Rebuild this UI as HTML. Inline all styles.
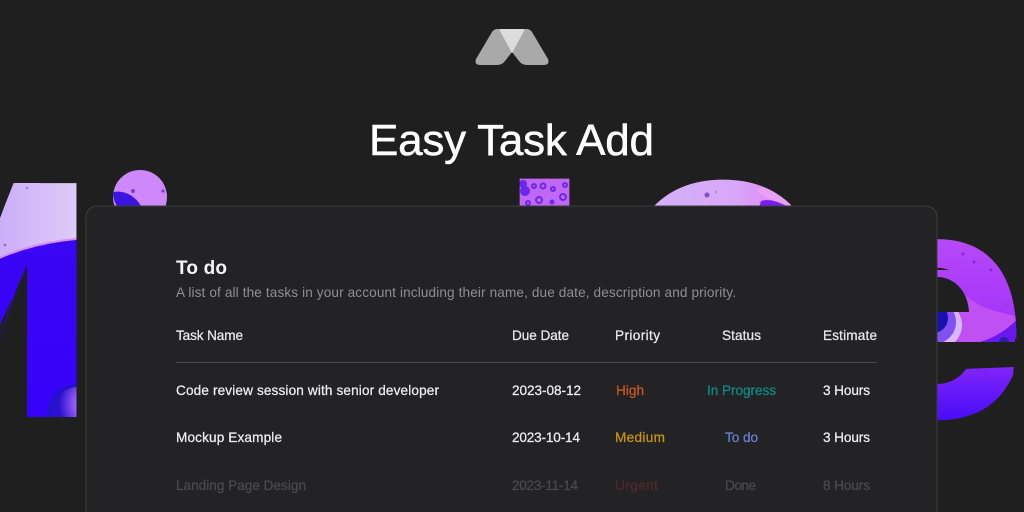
<!DOCTYPE html>
<html><head><meta charset="utf-8"><style>
html,body{margin:0;padding:0;background:#1f1f1f;width:1024px;height:512px;overflow:hidden}
svg{display:block}
text{font-family:"Liberation Sans",sans-serif}
.t{font-size:13.6px;stroke-width:.25px}
</style></head><body>
<svg width="1024" height="512" viewBox="0 0 1024 512" xmlns="http://www.w3.org/2000/svg">
<defs>
<linearGradient id="lav" x1="0" y1="0" x2="1" y2="0"><stop offset="0" stop-color="#c9aaf9"/><stop offset="1" stop-color="#e2d0f8"/></linearGradient>
<linearGradient id="blue" x1="0" y1="0" x2="0" y2="1"><stop offset="0" stop-color="#3a08f0"/><stop offset="1" stop-color="#3600fa"/></linearGradient>
<linearGradient id="oG" x1="0" y1="0" x2="1" y2="0"><stop offset="0" stop-color="#d0b4fa"/><stop offset=".6" stop-color="#d8a8f8"/><stop offset="1" stop-color="#e070f4"/></linearGradient>
<linearGradient id="eG" x1="0" y1="0" x2="0" y2="1"><stop offset="0" stop-color="#b84cf8"/><stop offset=".55" stop-color="#a030fa"/><stop offset="1" stop-color="#3c08f8"/></linearGradient>
<radialGradient id="bub" cx=".75" cy=".3" r=".6"><stop offset="0" stop-color="#e8d0fa"/><stop offset=".6" stop-color="#8a50f0"/><stop offset="1" stop-color="#2a10d0"/></radialGradient>
<clipPath id="cm"><text x="-184" y="417" font-size="340" font-weight="700">M</text><polygon points="14,183 40,183 40,417 27,417 27,265 0,327 0,218"/></clipPath>
<clipPath id="cl"><text transform="translate(494.400,425) scale(1.065,1)" font-size="340" font-weight="700">l</text></clipPath>
<clipPath id="co"><text transform="translate(611,417) scale(.85,1)" font-size="340" font-weight="700">O</text></clipPath>
<clipPath id="ce"><text transform="translate(839,421) scale(1,.973) translate(0,-4)" font-size="340" font-weight="700">e</text><rect x="937" y="270" width="50" height="60"/><rect x="937" y="325" width="78" height="17"/><polygon points="937,370 1014,367 1012,378 960,395 937,395"/></clipPath>
</defs>

<!-- large background word -->
<g clip-path="url(#cm)">
<rect x="-10" y="170" width="100" height="260" fill="url(#blue)"/>
<path d="M-10 170H90V238C50 240 20 248 -10 262Z" fill="url(#lav)"/>
<path d="M-10 262C20 248 50 240 90 238" fill="none" stroke="#d98cf0" stroke-width="2"/>
<circle cx="78" cy="415" r="31" fill="#2412c8"/>
<circle cx="79" cy="416" r="29" fill="url(#bub)"/>
<circle cx="27" cy="188" r="1.300" fill="#a878d8"/>
<circle cx="5" cy="245" r="1.300" fill="#a05cd0"/>
</g>
<polygon points="-1,182 14,182 -1,220" fill="#1f1f1f"/>
<polygon points="-1,327 13,297 -1,342" fill="#1f1f1f"/>
<circle cx="140" cy="197" r="27" fill="#cf88fa"/>
<path d="M113 192C125 190 135 196 141 206H117C114 201 113 197 113 192Z" fill="#3a14e0"/>
<circle cx="133" cy="191" r="2" fill="#7a40c8"/><circle cx="163" cy="191" r="1.600" fill="#7a40c8"/>
<g clip-path="url(#cl)">
<rect x="515" y="178" width="60" height="40" fill="#c068f4"/>
<g fill="none" stroke="#6a28ee" stroke-width="2">
<circle cx="525" cy="191" r="4" fill="#6a28ee"/><circle cx="539" cy="200" r="3"/><circle cx="563" cy="197" r="3"/><circle cx="543" cy="186" r="2.500"/><circle cx="528" cy="203" r="2"/><circle cx="553" cy="189" r="2"/><circle cx="552" cy="202" r="1.500"/><circle cx="534" cy="186" r="2"/><circle cx="565" cy="185" r="2"/><circle cx="523" cy="184" r="3" fill="#6a28ee"/>
</g>
</g>
<g clip-path="url(#co)">
<rect x="620" y="170" width="190" height="50" fill="url(#oG)"/>
<path d="M756 188C760 197 768 199 790 206V185Z" fill="#e8a0f6"/>
<path d="M759 208L761 201C768 199 776 200 790 208Z" fill="#7a1cf4"/>
<circle cx="707" cy="195" r="2.500" fill="#8a4cc8"/><circle cx="716" cy="192" r="1" fill="#a878d8"/>
</g>
<g clip-path="url(#ce)">
<rect x="930" y="230" width="95" height="200" fill="url(#eG)"/>
<path d="M966 296C985 312 1005 312 1020 318V345H930V296Z" fill="#c050f4"/>
<path d="M1020 316V345H965C990 342 1008 330 1020 316Z" fill="#6a18f0"/>
<circle cx="938" cy="325" r="24" fill="#d8b8fa"/>
<circle cx="934" cy="322" r="22" fill="#8050f0"/>
<circle cx="933" cy="318" r="15" fill="#1a10b0"/>
<circle cx="1004" cy="342" r="5" fill="#2a20a0"/>
<circle cx="963" cy="254" r="1.500" fill="#7a30c8"/><circle cx="974" cy="262" r="1.500" fill="#7a30c8"/><circle cx="991" cy="270" r="1.500" fill="#7a30c8"/><circle cx="1006" cy="304" r="1.500" fill="#8a40c8"/>
</g>
<path d="M930 277H937C955 277 968 292 969 312H930Z" fill="#1f1f1f"/>
<path d="M930 342H1024V367.500L969 364C963 376 952 384 937 384H930Z" fill="#1f1f1f"/>

<!-- logo -->
<path d="M497 29H527Q530 29 532 32L548 59Q550 65 544 65H527Q522 65 519 61L512 52L505 61Q502 65 497 65H480Q474 65 476 59L492 32Q494 29 497 29Z" fill="#a9a9a9"/>
<path d="M501 29H523Q525 29 524 31L512 53L500 31Q499 29 501 29Z" fill="#dcdcdc"/>

<text x="369" y="155" font-size="44" textLength="285" fill="#fff" stroke="#fff" stroke-width=".5">Easy Task Add</text>

<!-- card -->
<rect x="86" y="206" width="851" height="330" rx="11" fill="#232325" stroke="#3e3e3e"/>

<text x="176" y="274" font-size="19" font-weight="700" textLength="51" fill="#f5f5f5">To do</text>
<text x="176" y="297" class="t" textLength="560" fill="#8f8f8f">A list of all the tasks in your account including their name, due date, description and priority.</text>

<g class="hd" fill="#eaeaea" stroke="#eaeaea">
<text class="t" x="176" y="340" textLength="67">Task Name</text>
<text class="t" x="512" y="340" textLength="57">Due Date</text>
<text class="t" x="615" y="340" textLength="45">Priority</text>
<text class="t" x="722" y="340" textLength="39">Status</text>
<text class="t" x="823" y="340" textLength="54">Estimate</text>
</g>
<rect x="176" y="362" width="701" height="1" fill="#4a4a4c"/>

<g fill="#eeeeee" stroke="#eeeeee">
<text class="t" x="176" y="395" textLength="263">Code review session with senior developer</text>
<text class="t" x="512" y="395" textLength="69">2023-08-12</text>
<text class="t" x="823" y="395" textLength="47">3 Hours</text>
<text class="t" x="176" y="442" textLength="106">Mockup Example</text>
<text class="t" x="512" y="442" textLength="68">2023-10-14</text>
<text class="t" x="823" y="442" textLength="47">3 Hours</text>
</g>
<text class="t" x="616" y="395" textLength="28" fill="#c8561a" stroke="#c8561a">High</text>
<text class="t" x="707" y="395" textLength="69" fill="#0f8a88" stroke="#0f8a88">In Progress</text>
<text class="t" x="615" y="442" textLength="50" fill="#c8960c" stroke="#c8960c">Medium</text>
<text class="t" x="725" y="442" textLength="33" fill="#6b7fd0" stroke="#6b7fd0">To do</text>
<g fill="#4a4a4c" stroke="#4a4a4c">
<text class="t" x="176" y="490" textLength="130">Landing Page Design</text>
<text class="t" x="512" y="490" textLength="66">2023-11-14</text>
<text class="t" x="725" y="490" textLength="31">Done</text>
<text class="t" x="823" y="490" textLength="47">8 Hours</text>
</g>
<text class="t" x="615" y="490" textLength="43" fill="#52282c" stroke="#52282c">Urgent</text>
</svg>
</body></html>
